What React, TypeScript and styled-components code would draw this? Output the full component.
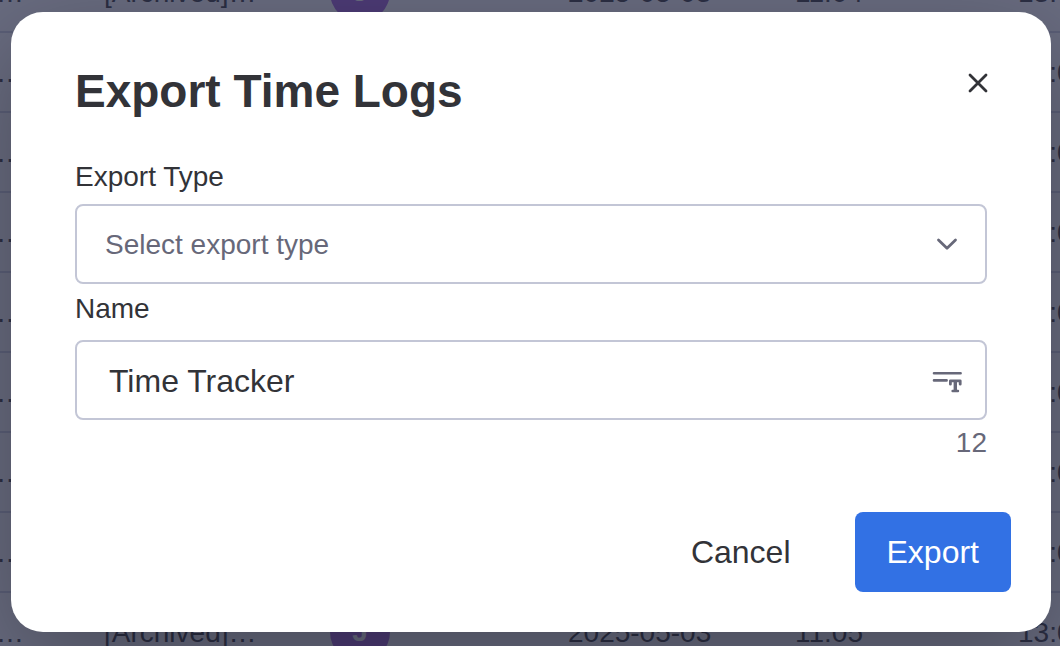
import React, { useState } from "react";
import styled, { createGlobalStyle } from "styled-components";

const GlobalStyle = createGlobalStyle`
  *, *::before, *::after { box-sizing: border-box; }
  body {
    margin: 0;
    background: #ffffff;
    color: #323338;
    font-family: "Liberation Sans", Arial, sans-serif;
  }
  button, input, select { font-family: inherit; color: inherit; }
`;

const Page = styled.div`
  position: relative;
  min-height: 100vh;
  overflow: hidden;
`;

const Board = styled.div`
  position: absolute;
  inset: 0;
  overflow: hidden;
`;

const LogTable = styled.table`
  width: 100%;
  min-width: 1120px;
  margin-top: -47px;
  table-layout: fixed;
  border-collapse: separate;
  border-spacing: 0;
`;

const Col = styled.col<{ $width?: number }>`
  width: ${({ $width }) => ($width ? `${$width}px` : "auto")};
`;

const Cell = styled.td`
  height: 80px;
  padding: 2px 0 0;
  border-bottom: 2px solid #d0d4e4;
  font-size: 28px;
  line-height: 32px;
  white-space: nowrap;
`;

const AvatarCell = styled(Cell)`
  padding: 0;
`;

const Truncated = styled.span`
  display: flex;
  justify-content: flex-end;
`;

const Avatar = styled.span`
  display: flex;
  align-items: center;
  justify-content: center;
  width: 60px;
  height: 60px;
  border-radius: 50%;
  background: #a25ddc;
  color: #ffffff;
  font-weight: 700;
`;

const Overlay = styled.div`
  position: relative;
  min-height: 100vh;
  padding: 12px 9px 14px 11px;
  background: rgba(42, 45, 74, 0.7);
`;

const Dialog = styled.section`
  display: flex;
  flex-direction: column;
  min-height: 620px;
  padding: 47px 64px 40px;
  border-radius: 32px;
  background: #ffffff;
  box-shadow: 0 30px 100px rgba(0, 0, 0, 0.3);
`;

const Header = styled.header`
  display: flex;
  align-items: flex-start;
  justify-content: space-between;
  margin-bottom: 37px;
`;

const Title = styled.h1`
  margin: 0;
  font-size: 46px;
  line-height: 64px;
  font-weight: 700;
`;

const CloseButton = styled.button`
  display: flex;
  align-items: center;
  justify-content: center;
  width: 48px;
  height: 48px;
  margin-right: -15px;
  padding: 0;
  border: 0;
  border-radius: 8px;
  background: transparent;
  cursor: pointer;
`;

const Label = styled.label`
  font-size: 28px;
  line-height: 34px;
`;

const Field = styled.div<{ $gap: number }>`
  display: flex;
  flex-direction: column;
  gap: ${({ $gap }) => $gap}px;
  margin-bottom: 8px;
`;

const Control = styled.div`
  display: flex;
  align-items: center;
  height: 80px;
  border: 2px solid #c3c6d6;
  border-radius: 8px;
  color: #676879;
`;

const SelectControl = styled(Control)`
  display: grid;

  & > * {
    grid-area: 1 / 1;
  }
`;

const Select = styled.select`
  width: 100%;
  height: 100%;
  padding: 0 64px 0 28px;
  border: 0;
  border-radius: 8px;
  outline: 0;
  appearance: none;
  background: transparent;
  font-size: 28px;
`;

const Chevron = styled.svg`
  justify-self: end;
  margin-right: 24px;
  pointer-events: none;
`;

const NameInput = styled.input`
  flex: 1;
  min-width: 0;
  height: 100%;
  padding: 2px 32px 0;
  border: 0;
  border-radius: 8px;
  outline: 0;
  background: transparent;
  color: #323338;
  font-size: 32px;
`;

const FieldIcon = styled.svg`
  flex: none;
  margin-right: 20px;
`;

const Counter = styled.output`
  color: #676879;
  font-size: 28px;
  line-height: 30px;
  text-align: right;
`;

const Footer = styled.footer`
  display: flex;
  justify-content: flex-end;
  gap: 32px;
  margin: auto -24px 0 0;
`;

const Button = styled.button<{ $primary?: boolean }>`
  height: 80px;
  padding: 0 32px;
  border: 0;
  border-radius: 8px;
  background: ${({ $primary }) => ($primary ? "#3271e4" : "transparent")};
  color: ${({ $primary }) => ($primary ? "#ffffff" : "#323338")};
  font-size: 32px;
  cursor: pointer;
`;

const starts = ["11:04", "11:05", "11:05", "11:05", "11:05", "11:05", "11:05", "11:05", "11:05"];

export default function App() {
  const [type, setType] = useState("");
  const [name, setName] = useState("Time Tracker");

  return (
    <>
      <GlobalStyle />
      <Page>
        <Board aria-hidden="true">
          <LogTable>
            <colgroup>
              <Col $width={24} />
              <Col $width={80} />
              <Col $width={226} />
              <Col $width={238} />
              <Col $width={227} />
              <Col $width={223} />
              <Col />
            </colgroup>
            <tbody>
              {starts.map((start, i) => (
                <tr key={i}>
                  <Cell>
                    <Truncated>…</Truncated>
                  </Cell>
                  <Cell />
                  <Cell>[Archived]…</Cell>
                  <AvatarCell>
                    <Avatar>J</Avatar>
                  </AvatarCell>
                  <Cell>2025-05-03</Cell>
                  <Cell>{start}</Cell>
                  <Cell>13:00</Cell>
                </tr>
              ))}
            </tbody>
          </LogTable>
        </Board>
        <Overlay>
          <Dialog role="dialog" aria-modal="true" aria-labelledby="export-title">
            <Header>
              <Title id="export-title">Export Time Logs</Title>
              <CloseButton type="button" aria-label="Close">
                <svg width="20" height="20" viewBox="0 0 20 20" fill="none" stroke="#323338" strokeWidth="2.8" strokeLinecap="round">
                  <path d="M2 2l16 16M18 2L2 18" />
                </svg>
              </CloseButton>
            </Header>
            <Field $gap={10}>
              <Label htmlFor="export-type">Export Type</Label>
              <SelectControl>
                <Select id="export-type" value={type} onChange={(e) => setType(e.target.value)}>
                  <option value="">Select export type</option>
                  <option value="csv">CSV</option>
                  <option value="xlsx">Excel</option>
                </Select>
                <Chevron width="28" height="28" viewBox="0 0 28 28" fill="none" stroke="#676879" strokeWidth="2.8" strokeLinecap="round" strokeLinejoin="round">
                  <path d="M5.5 10l8.5 8.2 8.5-8.2" />
                </Chevron>
              </SelectControl>
            </Field>
            <Field $gap={14}>
              <Label htmlFor="export-name">Name</Label>
              <Control>
                <NameInput id="export-name" type="text" value={name} onChange={(e) => setName(e.target.value)} />
                <FieldIcon width="34" height="26" viewBox="0 0 34 26" fill="none" stroke="#676879" strokeLinecap="round" strokeLinejoin="round" aria-hidden="true">
                  <path d="M3 6.2h26.6M3 13.4h12.6" strokeWidth="2.6" />
                  <path d="M19.4 17.2v-3.4h9.8v3.4" strokeWidth="2.8" />
                  <path d="M24.3 13.8v10" strokeWidth="3.4" strokeLinecap="butt" />
                  <path d="M21.6 24h5.4" strokeWidth="2.4" />
                </FieldIcon>
              </Control>
            </Field>
            <Counter htmlFor="export-name">{name.length}</Counter>
            <Footer>
              <Button type="button">Cancel</Button>
              <Button type="button" $primary>
                Export
              </Button>
            </Footer>
          </Dialog>
        </Overlay>
      </Page>
    </>
  );
}
